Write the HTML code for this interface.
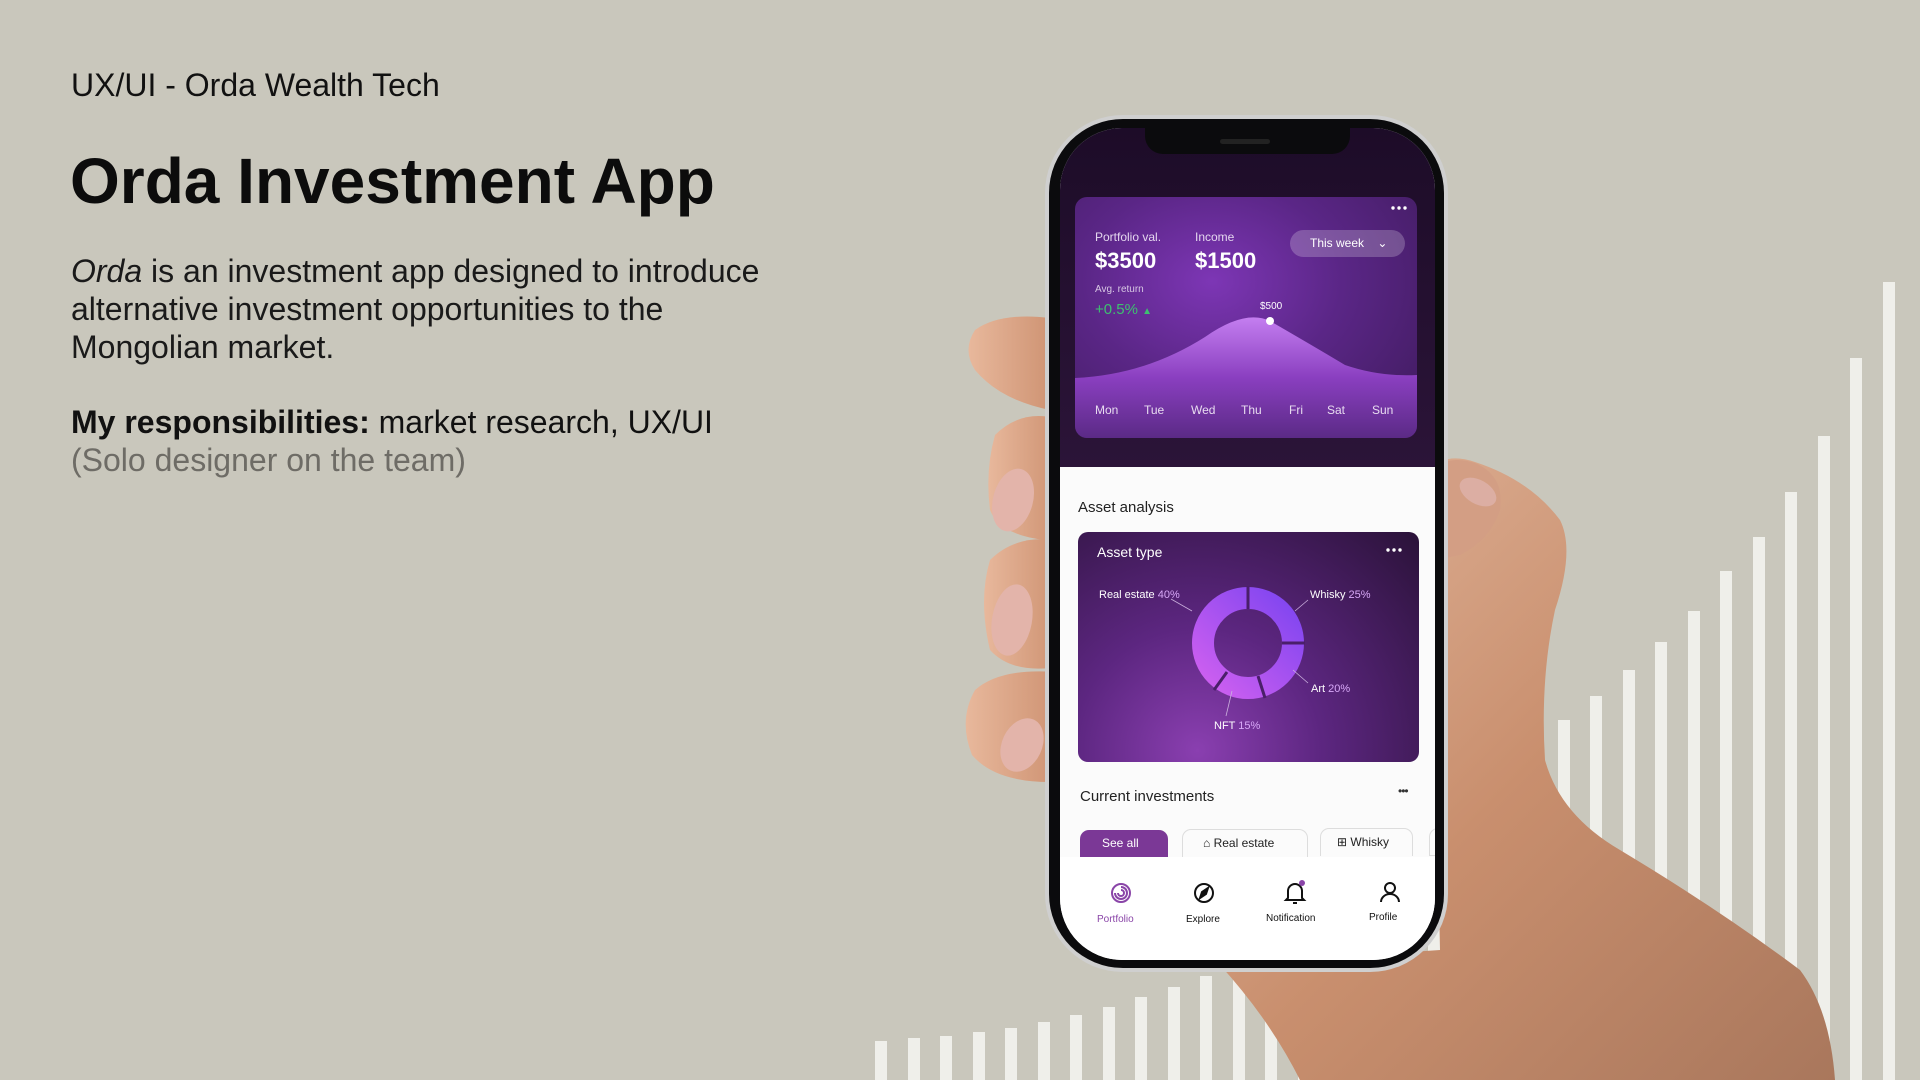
<!DOCTYPE html>
<html><head><meta charset="utf-8"><style>
*{margin:0;padding:0;box-sizing:border-box}
body{width:1920px;height:1080px;overflow:hidden;background:#c9c7bc;font-family:"Liberation Sans",sans-serif;position:relative}
.a{position:absolute;white-space:nowrap}
</style></head><body>
<svg class="a" style="left:0;top:0" width="1920" height="1080">
<g fill="#efefea" id="bars"></g>
<defs>
<linearGradient id="sk" x1="0" y1="0" x2="1" y2="1"><stop offset="0" stop-color="#e2b79d"/><stop offset="0.5" stop-color="#c98f6e"/><stop offset="1" stop-color="#a9775c"/></linearGradient>
<linearGradient id="sk2" x1="0" y1="0" x2="1" y2="0"><stop offset="0" stop-color="#e8b89c"/><stop offset="1" stop-color="#cf9474"/></linearGradient>
</defs>
<path d="M1430 470 Q1445 452 1475 462 Q1530 480 1560 520 Q1575 550 1555 610 Q1540 680 1545 760 Q1560 815 1620 850 Q1720 910 1800 970 Q1830 1010 1835 1080 L1300 1080 Q1270 1020 1220 965 L1440 950 Z" fill="url(#sk)"/>
<path d="M1435 468 Q1450 455 1475 463 Q1505 476 1500 510 Q1490 540 1460 555 L1435 560Z" fill="#d39e84"/>
<ellipse cx="1478" cy="492" rx="20" ry="12" fill="#dcaea3" transform="rotate(30 1478 492)"/>
<path d="M1050 318 Q1000 312 975 330 Q962 350 975 370 Q1000 400 1050 410Z" fill="url(#sk2)"/>
<path d="M1055 418 Q1020 410 995 435 Q985 470 990 510 Q1000 535 1045 540Z" fill="url(#sk2)"/>
<path d="M1055 540 Q1015 535 990 560 Q978 600 990 650 Q1010 672 1050 668Z" fill="url(#sk2)"/>
<path d="M1055 672 Q1000 668 975 690 Q958 720 972 755 Q995 782 1050 782Z" fill="url(#sk2)"/>
<ellipse cx="1013" cy="500" rx="20" ry="32" fill="#e3b4aa" transform="rotate(15 1013 500)"/>
<ellipse cx="1012" cy="620" rx="20" ry="36" fill="#e3b4aa" transform="rotate(10 1012 620)"/>
<ellipse cx="1022" cy="745" rx="20" ry="28" fill="#e3b4aa" transform="rotate(25 1022 745)"/>
<rect x="1045" y="115" width="403" height="857" rx="78" fill="#cfcfcf"/>
<rect x="1049" y="119" width="395" height="849" rx="74" fill="#0b0b0d"/>
</svg>
<div class="a" style="left:1060px;top:128px;width:375px;height:832px;border-radius:62px;overflow:hidden;background:#fbfbfb">
 <div class="a" style="left:0;top:0;width:375px;height:339px;background:linear-gradient(#1d0c28,#2b1438)"></div>
 <div class="a" style="left:85px;top:0;width:205px;height:26px;background:#0b0b0d;border-radius:0 0 18px 18px"></div>
 <div class="a" style="left:160px;top:11px;width:50px;height:5px;background:#222;border-radius:3px"></div>
 <div class="a" style="left:15px;top:69px;width:342px;height:241px;border-radius:12px;background:radial-gradient(ellipse at 40% 35%,#7d36b5 0%,#5a2686 45%,#3d1a5a 100%);overflow:hidden">
  <svg class="a" style="left:0;top:0" width="342" height="241">
   <defs><linearGradient id="cg" x1="0" y1="0" x2="0" y2="1"><stop offset="0" stop-color="#c47ef0"/><stop offset="0.5" stop-color="#8a3fc0"/><stop offset="1" stop-color="#5b2a86"/></linearGradient></defs>
   <path d="M0 181 Q70 178 130 140 Q170 112 195 124 Q240 150 270 168 Q305 180 342 178 L342 241 L0 241Z" fill="url(#cg)"/>
   <circle cx="195" cy="124" r="4" fill="#fff"/>
   <g fill="#fff"><circle cx="318" cy="11" r="1.7"/><circle cx="324" cy="11" r="1.7"/><circle cx="330" cy="11" r="1.7"/></g>
  </svg>
  <div class="a" style="left:20px;top:33px;font-size:12px;color:#e4d6ee">Portfolio val.</div>
  <div class="a" style="left:120px;top:33px;font-size:12px;color:#e4d6ee">Income</div>
  <div class="a" style="left:20px;top:51px;font-size:22px;font-weight:bold;color:#fff">$3500</div>
  <div class="a" style="left:120px;top:51px;font-size:22px;font-weight:bold;color:#fff">$1500</div>
  <div class="a" style="left:215px;top:33px;width:115px;height:27px;border-radius:14px;background:rgba(255,255,255,.22);color:#fff;font-size:12px;line-height:27px;padding-left:20px">This week <span style="margin-left:10px">⌄</span></div>
  <div class="a" style="left:20px;top:87px;font-size:10px;color:#d8c8e4">Avg. return</div>
  <div class="a" style="left:20px;top:104px;font-size:15px;color:#3ec070">+0.5% <span style="font-size:10px">▲</span></div>
  <div class="a" style="left:185px;top:104px;font-size:10px;color:#fff">$500</div>
  <div class="a" style="left:0;top:206px;width:342px;font-size:12px;color:#e8dcf0">
   <span class="a" style="left:20px">Mon</span><span class="a" style="left:69px">Tue</span><span class="a" style="left:116px">Wed</span><span class="a" style="left:166px">Thu</span><span class="a" style="left:214px">Fri</span><span class="a" style="left:252px">Sat</span><span class="a" style="left:297px">Sun</span>
  </div>
 </div>
 <div class="a" style="left:18px;top:371px;font-size:15px;color:#222">Asset analysis</div>
 <div class="a" style="left:18px;top:404px;width:341px;height:230px;border-radius:10px;background:radial-gradient(ellipse at 35% 95%,#8a3fb0 0%,#5c2680 40%,#2a1238 100%);overflow:hidden">
  <svg class="a" style="left:0;top:0" width="341" height="230">
   <defs><linearGradient id="dg" x1="1" y1="0" x2="0" y2="1"><stop offset="0" stop-color="#7f45f0"/><stop offset="1" stop-color="#d060f0"/></linearGradient></defs>
   <g transform="translate(170 111)">
    <circle r="45" fill="none" stroke="url(#dg)" stroke-width="22"/>
    <g stroke="#4a1f6a" stroke-width="3"><line x1="0" y1="-34" x2="0" y2="-57"/><line x1="34" y1="0" x2="57" y2="0"/><line x1="10" y1="33" x2="17" y2="55"/><line x1="-21" y1="29" x2="-34" y2="47"/></g>
   </g>
   <g stroke="#cbb0dd" stroke-width="0.8"><line x1="93" y1="67" x2="114" y2="79"/><line x1="217" y1="79" x2="230" y2="68"/><line x1="215" y1="138" x2="230" y2="151"/><line x1="154" y1="159" x2="148" y2="184"/></g>
   <g fill="#fff"><circle cx="316" cy="18" r="1.7"/><circle cx="322" cy="18" r="1.7"/><circle cx="310" cy="18" r="1.7"/></g>
  </svg>
  <div class="a" style="left:19px;top:12px;font-size:14px;color:#fff">Asset type</div>
  <div class="a" style="left:21px;top:57px;font-size:11px;color:#fff">Real estate <span style="color:#d8a8f8">40%</span></div>
  <div class="a" style="left:232px;top:57px;font-size:11px;color:#fff">Whisky <span style="color:#d8a8f8">25%</span></div>
  <div class="a" style="left:233px;top:151px;font-size:11px;color:#fff">Art <span style="color:#d8a8f8">20%</span></div>
  <div class="a" style="left:136px;top:188px;font-size:11px;color:#fff">NFT <span style="color:#d8a8f8">15%</span></div>
 </div>
 <div class="a" style="left:20px;top:660px;font-size:15px;color:#222">Current investments</div>
 <div class="a" style="left:338px;top:656px;font-size:12px;color:#333;letter-spacing:-1px">•••</div>
 <div class="a" style="left:20px;top:702px;width:88px;height:28px;border-radius:9px 9px 0 0;background:#7b3896;color:#fff;font-size:12px;line-height:26px;padding-left:22px">See all</div>
 <div class="a" style="left:122px;top:701px;width:126px;height:28px;border:1px solid #ddd;border-bottom:none;border-radius:9px 9px 0 0;font-size:12px;line-height:26px;padding-left:20px;color:#222">⌂ Real estate</div>
 <div class="a" style="left:260px;top:700px;width:93px;height:28px;border:1px solid #ddd;border-bottom:none;border-radius:9px 9px 0 0;font-size:12px;line-height:26px;padding-left:16px;color:#222">⊞ Whisky</div>
 <div class="a" style="left:369px;top:700px;width:40px;height:28px;border:1px solid #ddd;border-radius:9px 0 0 0"></div>
 <div class="a" style="left:0;top:729px;width:375px;height:110px;background:#fff"></div>
 <svg class="a" style="left:0;top:740px" width="375" height="50">
  <g fill="none" stroke="#8a45a8" stroke-width="2"><circle cx="61" cy="25" r="9"/><path d="M61 19 a6 6 0 1 1 -6 6"/><path d="M61 22 a3 3 0 1 1 -3 3"/></g>
  <g fill="none" stroke="#111" stroke-width="2"><circle cx="144" cy="25" r="9"/><path d="M148 20 L142 24 L140 30 L146 26Z" fill="#111"/>
  <path d="M228 30 v-7 a7 7 0 0 1 14 0 v7 l2 2 h-18z M233 35 h4"/><circle cx="242" cy="15" r="3" fill="#8a45a8" stroke="none"/>
  <circle cx="330" cy="20" r="5"/><path d="M321 34 a9 8 0 0 1 18 0"/></g>
 </svg>
 <div class="a" style="left:37px;top:786px;font-size:10px;color:#8a45a8">Portfolio</div>
 <div class="a" style="left:126px;top:786px;font-size:10px;color:#111">Explore</div>
 <div class="a" style="left:206px;top:785px;font-size:10px;color:#111">Notification</div>
 <div class="a" style="left:309px;top:784px;font-size:10px;color:#111">Profile</div>
</div>
<div class="a" style="left:71px;top:67px;font-size:32px;color:#111">UX/UI - Orda Wealth Tech</div>
<div class="a" style="left:70px;top:144px;font-size:64px;font-weight:bold;color:#0c0c0c">Orda Investment App</div>
<div class="a" style="left:71px;top:252px;font-size:32px;line-height:38px;color:#1a1a1a;white-space:normal;width:740px"><i>Orda</i> is an investment app designed to introduce alternative investment opportunities to the Mongolian market.</div>
<div class="a" style="left:71px;top:403px;font-size:32px;line-height:38px;color:#111"><b>My responsibilities:</b> market research, UX/UI<br><span style="color:#6e6c66">(Solo designer on the team)</span></div>
<script>
var t=[1041,1038,1036,1032,1028,1022,1015,1007,997,987,976,960,943,925,905,883,860,834,808,780,751,720,696,670,642,611,571,537,492,436,358,282];
var g=document.getElementById('bars'),s='';
for(var i=0;i<t.length;i++){var x=Math.round(875+i*32.5);s+='<rect x="'+x+'" y="'+t[i]+'" width="12" height="'+(1080-t[i])+'"/>';}
g.innerHTML=s;
</script>
</body></html>
